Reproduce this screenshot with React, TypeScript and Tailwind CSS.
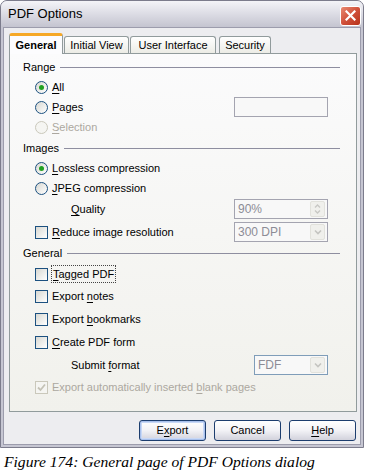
import React from "react";

const SANS = "font-['Liberation_Sans',Arial,sans-serif]";

function U({ children }: { children: React.ReactNode }) {
  return <span className="underline underline-offset-[2px]">{children}</span>;
}

function Radio({ checked, disabled }: { checked?: boolean; disabled?: boolean }) {
  return (
    <div
      className={`w-[13px] h-[13px] rounded-full border flex items-center justify-center shrink-0 ${
        disabled
          ? "border-[#cac8bb] bg-[#f5f5f2]"
          : "border-[#1c5180] bg-gradient-to-br from-[#d8d8d2] to-white"
      }`}
    >
      {checked && <div className="w-[5px] h-[5px] rounded-full bg-[#21a121]" />}
    </div>
  );
}

function Check({ checked, disabled }: { checked?: boolean; disabled?: boolean }) {
  return (
    <div
      className={`w-[13px] h-[13px] border flex items-center justify-center shrink-0 ${
        disabled
          ? "border-[#cac8bb] bg-[#f5f5f2]"
          : "border-[#1c5180] bg-gradient-to-br from-[#d8d8d2] to-white"
      }`}
    >
      {checked && (
        <svg width="9" height="9" viewBox="0 0 9 9">
          <path d="M1 4.5 L3.5 7 L8 1.5" fill="none" stroke={disabled ? "#c4c2b6" : "#21a121"} strokeWidth="1.8" />
        </svg>
      )}
    </div>
  );
}

function Section({ label }: { label: string }) {
  return (
    <div className="flex items-center gap-[5px] pr-[16px] w-full">
      <span className="text-black">{label}</span>
      <div className="flex-1 h-px bg-[#8e8ea0]" />
    </div>
  );
}

function Field({ value, w, arrow, spin, blue }: { value: string; w: string; arrow?: boolean; spin?: boolean; blue?: boolean }) {
  return (
    <div
      className={`${w} h-[20px] border ${blue ? "border-[#7f9db9]" : "border-[#a4a4b0]"} bg-[#f8f8f8] flex items-center justify-between pl-[3px] pr-[2px] text-[#8c8c96]`}
    >
      <span className="text-[12px]">{value}</span>
      {spin && (
        <div className="w-[15px] h-[16px] flex flex-col rounded-[2px] bg-[#f0f0ec] border border-[#e2e2dc] items-center justify-center">
          <svg width="7" height="12" viewBox="0 0 7 12">
            <path d="M1 4.5 L3.5 2 L6 4.5 M1 7.5 L3.5 10 L6 7.5" fill="none" stroke="#c8c8c4" strokeWidth="1.4" />
          </svg>
        </div>
      )}
      {arrow && (
        <div className="w-[15px] h-[16px] rounded-[2px] bg-[#f0f0ec] border border-[#e2e2dc] flex items-center justify-center">
          <svg width="8" height="6" viewBox="0 0 8 6">
            <path d="M1 1.5 L4 4.5 L7 1.5" fill="none" stroke="#c4c4c0" strokeWidth="1.6" />
          </svg>
        </div>
      )}
    </div>
  );
}

function Btn({ children, def }: { children: React.ReactNode; def?: boolean }) {
  return (
    <div
      className={`w-[67px] h-[21px] rounded-[3px] border border-[#1c3d6e] bg-gradient-to-b from-white via-[#f2f2f6] to-[#d2d2dc] flex items-center justify-center text-black ${
        def ? "shadow-[inset_0_0_0_1px_#a8c0ec,inset_0_0_0_2px_#c8d8f6]" : ""
      }`}
    >
      <span>{children}</span>
    </div>
  );
}

const TABS = [
  { label: "Initial View", w: "w-[65px]" },
  { label: "User Interface", w: "w-[86px]" },
  { label: "Security", w: "w-[52px]" },
];

export default function App() {
  return (
    <div className={`w-[366px] h-[473px] bg-white ${SANS} text-[11px] text-black overflow-hidden`}>
      {/* window */}
      <div className="w-[364px] h-[448px] rounded-t-[7px] border border-[#7c7c8c] bg-[#c6c6d2] p-[2px] flex flex-col">
        {/* title bar */}
        <div className="h-[26px] -mx-[2px] -mt-[2px] rounded-t-[6px] bg-gradient-to-b from-[#f4f4f8] via-[#dcdce4] to-[#c4c4d0] flex items-center justify-between pl-[7px] pr-[2px] shrink-0">
          <span className="text-[13px] text-black">PDF Options</span>
          <div className="w-[21px] h-[20px] mt-[3px] rounded-[3px] border border-white bg-gradient-to-br from-[#e88a72] via-[#d0503a] to-[#b83218] flex items-center justify-center">
            <svg width="11" height="11" viewBox="0 0 11 11">
              <path d="M1.5 1.5 L9.5 9.5 M9.5 1.5 L1.5 9.5" stroke="white" strokeWidth="2.2" strokeLinecap="square" />
            </svg>
          </div>
        </div>
        {/* body */}
        <div className="flex-1 border border-[#9c9cac] bg-[#ededf0] flex flex-col pl-[5px] pr-[3px]">
          {/* tabs */}
          <div className="flex items-end h-[25px]">
            <div className="w-[54px] h-[21px] bg-[#fcfcfe] border-x border-[#919b9c] rounded-t-[3px] border-t-[3px] border-t-[#f6a826] flex items-center justify-center font-bold -mb-px relative z-10">
              General
            </div>
            {TABS.map((t) => (
              <div
                key={t.label}
                className={`${t.w} h-[17px] ml-[1px] bg-gradient-to-b from-white to-[#ecece6] border border-b-0 border-[#919b9c] rounded-t-[3px] flex items-center justify-center last:ml-[3px]`}
              >
                {t.label}
              </div>
            ))}
          </div>
          {/* panel */}
          <div className="w-[348px] h-[359px] border border-[#919b9c] bg-gradient-to-b from-[#fbfbfc] to-[#f1f1ec] pl-[13px] pt-[4px] flex flex-col">
            <div className="h-[19px] flex items-center"><Section label="Range" /></div>
            <div className="h-[20px] flex items-center pl-[12px] gap-[4px]"><Radio checked /><span><U>A</U>ll</span></div>
            <div className="h-[20px] flex items-center pl-[12px]">
              <div className="flex items-center gap-[4px] w-[199px]"><Radio /><span><U>P</U>ages</span></div>
              <Field value="" w="w-[94px]" />
            </div>
            <div className="h-[21px] flex items-center pl-[12px] gap-[4px] text-[#aca8a0]"><Radio disabled /><span><U>S</U>election</span></div>
            <div className="h-[20px] flex items-center"><Section label="Images" /></div>
            <div className="h-[20px] flex items-center pl-[12px] gap-[4px]"><Radio checked /><span><U>L</U>ossless compression</span></div>
            <div className="h-[20px] flex items-center pl-[12px] gap-[4px]"><Radio /><span><U>J</U>PEG compression</span></div>
            <div className="h-[22px] flex items-center pl-[48px]">
              <span className="w-[163px]"><U>Q</U>uality</span>
              <Field value="90%" w="w-[94px]" spin />
            </div>
            <div className="h-[24px] flex items-center pl-[12px]">
              <div className="flex items-center gap-[4px] w-[199px]"><Check /><span><U>R</U>educe image resolution</span></div>
              <Field value="300 DPI" w="w-[94px]" arrow />
            </div>
            <div className="h-[19px] flex items-center"><Section label="General" /></div>
            <div className="h-[22px] flex items-center pl-[12px] gap-[4px]">
              <Check />
              <span className="outline-1 outline-dotted outline-[#444] px-[1px]"><U>T</U>agged PDF</span>
            </div>
            <div className="h-[23px] flex items-center pl-[12px] gap-[4px]"><Check /><span>Export <U>n</U>otes</span></div>
            <div className="h-[23px] flex items-center pl-[12px] gap-[4px]"><Check /><span>Export <U>b</U>ookmarks</span></div>
            <div className="h-[23px] flex items-center pl-[12px] gap-[4px]"><Check /><span><U>C</U>reate PDF form</span></div>
            <div className="h-[22px] flex items-center pl-[48px]">
              <span className="w-[183px]">Submit <U>f</U>ormat</span>
              <Field value="FDF" w="w-[74px]" arrow blue />
            </div>
            <div className="h-[22px] flex items-center pl-[12px] gap-[4px] text-[#aca8a0]">
              <Check checked disabled /><span>Export automatically inserted <U>b</U>lank pages</span>
            </div>
          </div>
          {/* buttons */}
          <div className="flex justify-end gap-[8px] mt-[8px] pr-[1px]">
            <Btn def>E<U>x</U>port</Btn>
            <Btn>Cancel</Btn>
            <Btn><U>H</U>elp</Btn>
          </div>
        </div>
      </div>
      <div className="pl-[4px] pt-[5px] font-['Liberation_Serif','Times_New_Roman',serif] italic text-[15.6px] leading-[18px]">
        Figure 174: General page of PDF Options dialog
      </div>
    </div>
  );
}
